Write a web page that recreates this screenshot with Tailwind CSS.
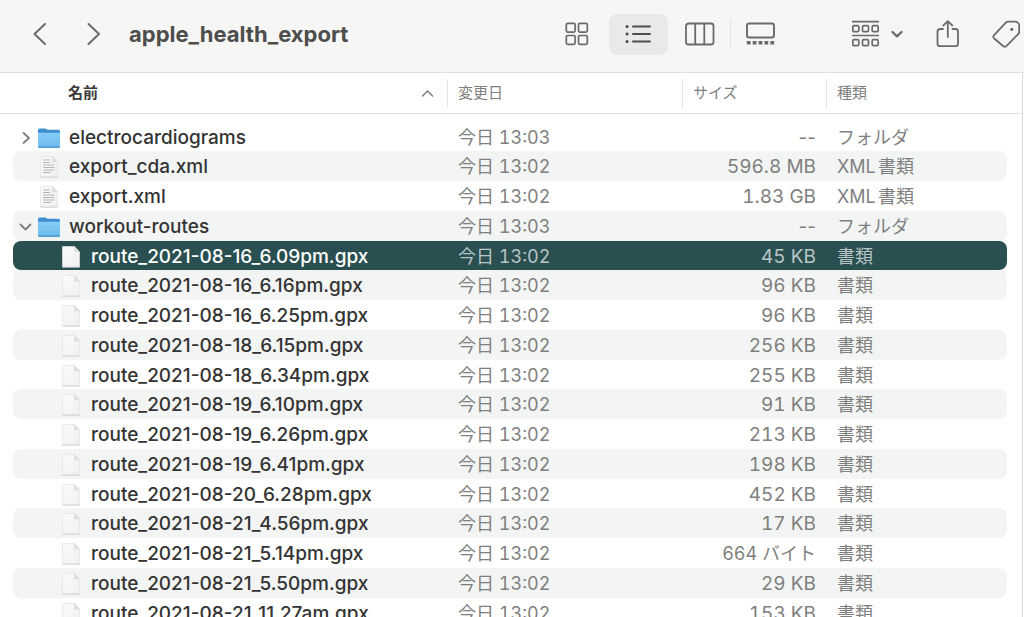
<!DOCTYPE html>
<html lang="ja">
<head>
<meta charset="utf-8">
<meta name="viewport" content="width=device-width, initial-scale=1">
<title>apple_health_export</title>
<script src="https://cdn.jsdelivr.net/npm/@tailwindcss/browser@4"></script>
</head>
<body class="flex h-screen flex-col overflow-hidden bg-white font-['Inter','Noto_Sans_CJK_JP',sans-serif] text-[#2b2b2b]">

<svg class="absolute size-0" aria-hidden="true">
  <defs>
    <linearGradient id="folder-face" x1="0" y1="0" x2="0" y2="1">
      <stop offset="0" stop-color="#86cdf7"/><stop offset="1" stop-color="#6cbcee"/>
    </linearGradient>
    <linearGradient id="paper" x1="0" y1="0" x2="1" y2="1">
      <stop offset="0" stop-color="#fbfbfb"/><stop offset="1" stop-color="#f0f0f0"/>
    </linearGradient>
    <symbol id="folder" viewBox="0 0 24 22">
      <path d="M1 3a1.6 1.6 0 0 1 1.600-1.600h5.200c.8 0 1.200.2 1.700.7l.6.6h11.300A1.600 1.600 0 0 1 23 4.300V10H1z" fill="#3f8fd0"/>
      <path d="M1 5.800h22v13.700a1.400 1.400 0 0 1-1.400 1.400H2.400A1.400 1.400 0 0 1 1 19.500z" fill="url(#folder-face)"/>
      <path d="M1 19.200v.4A1.400 1.400 0 0 0 2.400 21h19.200a1.400 1.400 0 0 0 1.400-1.400v-.4z" fill="#559fce"/>
    </symbol>
    <symbol id="doc" viewBox="0 0 24 24">
      <path d="M3.500 1.500h12L20.500 7v15h-17z" fill="url(#paper)" stroke="#e2e2e2" stroke-width=".7"/>
      <path d="M3.300 22.200h17.400" stroke="#cdcdcd" stroke-width=".8"/>
      <path d="M15.500 1.500V7h5z" fill="#dedede" stroke="#d6d6d6" stroke-width=".4"/>
    </symbol>
    <symbol id="doc-text" viewBox="0 0 24 24">
      <use href="#doc"/>
      <path d="M6 5h7M6 7.500h7M6 10h11.500M6 12.500h11.500M6 15h11.500M6 17.500h8" stroke="#b4b4b4" stroke-width="1.200"/>
    </symbol>
    <symbol id="closed" viewBox="0 0 14 14">
      <path d="M4.500 2 10 7l-5.500 5" fill="none" stroke="currentColor" stroke-width="1.800" stroke-linecap="round" stroke-linejoin="round"/>
    </symbol>
    <symbol id="open" viewBox="0 0 14 14">
      <path d="M1.500 4.500 6.500 9.500l5-5" fill="none" stroke="currentColor" stroke-width="1.800" stroke-linecap="round" stroke-linejoin="round"/>
    </symbol>
  </defs>
</svg>

<header class="flex h-[73px] shrink-0 items-center justify-between border-b border-[#e0e0e0] bg-[#f6f6f5] pb-1 pl-7 text-[#6b6b6a]">
  <div class="flex items-center">
    <button type="button" aria-label="戻る" class="flex h-10 w-6 items-center justify-center">
      <svg class="h-6 w-6" viewBox="0 0 24 24" fill="none" stroke="currentColor" stroke-width="2" stroke-linecap="round" stroke-linejoin="round"><path d="M17 2 6.500 12 17 22"/></svg>
    </button>
    <button type="button" aria-label="進む" class="ml-[30px] flex h-10 w-6 items-center justify-center">
      <svg class="h-6 w-6" viewBox="0 0 24 24" fill="none" stroke="currentColor" stroke-width="2" stroke-linecap="round" stroke-linejoin="round"><path d="M6.500 2 17 12 6.500 22"/></svg>
    </button>
    <h1 class="ml-[23px] text-[22px] leading-8 font-bold text-[#4d4d4c]">apple_health_export</h1>
  </div>
  <div class="flex shrink-0 items-center">
    <button type="button" aria-label="アイコン表示" class="flex h-10 w-6 items-center justify-center">
      <svg class="h-6 w-6" viewBox="0 0 24 24" fill="none" stroke="currentColor" stroke-width="1.700"><rect x="1.300" y="1.300" width="8.800" height="8.800" rx="1.300"/><rect x="13.500" y="1.300" width="8.800" height="8.800" rx="1.300"/><rect x="1.300" y="13.500" width="8.800" height="8.800" rx="1.300"/><rect x="13.500" y="13.500" width="8.800" height="8.800" rx="1.300"/></svg>
    </button>
    <button type="button" aria-label="リスト表示" aria-pressed="true" class="ml-5 flex h-[41px] w-[59px] items-center justify-center rounded-lg bg-[#e9e9e8] text-[#4d4d4c]">
      <svg class="h-5 w-7" viewBox="0 0 28 20" fill="none" stroke="currentColor" stroke-width="2" stroke-linecap="round"><path d="M8 2.500h17M8 10h17M8 17.500h17"/><path stroke-width="3" d="M2 2.500h.1M2 10h.1M2 17.500h.1"/></svg>
    </button>
    <button type="button" aria-label="カラム表示" class="ml-4 flex h-10 w-8 items-center justify-center">
      <svg class="h-6 w-8" viewBox="0 0 32 24" fill="none" stroke="currentColor" stroke-width="1.800"><rect x="2" y="1.500" width="27.500" height="21" rx="2.500"/><path d="M11.200 1.500v21M20.300 1.500v21"/></svg>
    </button>
    <span class="ml-[14px] h-[30px] w-px bg-[#e2e2e1]"></span>
    <button type="button" aria-label="ギャラリー表示" class="ml-[14px] flex h-10 w-8 items-center justify-center">
      <svg class="h-6 w-8" viewBox="0 0 32 24" fill="none" stroke="currentColor" stroke-width="1.900"><rect x="2" y="1.500" width="27" height="14" rx="2.300"/><path stroke-width="3.600" stroke-dasharray="3.800 2.100" d="M1.800 20.800h27.600"/></svg>
    </button>
    <button type="button" aria-label="グループ分け" class="ml-[74px] flex h-10 w-[54px] items-center justify-between">
      <svg class="h-7 w-[30px]" viewBox="0 0 30 28" fill="none" stroke="currentColor" stroke-width="1.700"><path d="M1 1.700h27M1 15.500h27"/><rect x="1.800" y="5.700" width="6" height="6" rx="1.200"/><rect x="11.500" y="5.700" width="6" height="6" rx="1.200"/><rect x="21.200" y="5.700" width="6" height="6" rx="1.200"/><rect x="1.800" y="19.700" width="6" height="6" rx="1.200"/><rect x="11.500" y="19.700" width="6" height="6" rx="1.200"/><rect x="21.200" y="19.700" width="6" height="6" rx="1.200"/></svg>
      <svg class="h-[14px] w-[14px]" viewBox="0 0 14 14" fill="none" stroke="currentColor" stroke-width="2.400" stroke-linecap="round" stroke-linejoin="round"><path d="M1.500 5 6 9.300 10.500 5"/></svg>
    </button>
    <button type="button" aria-label="共有" class="ml-[31px] flex h-10 w-6 items-center justify-center">
      <svg class="h-7 w-6" viewBox="0 0 24 28" fill="none" stroke="currentColor" stroke-width="1.800" stroke-linecap="round" stroke-linejoin="round"><path d="M7 9H4a2.500 2.500 0 0 0-2.500 2.500v12.200A2.500 2.500 0 0 0 4 26.200h15.500a2.500 2.500 0 0 0 2.500-2.500V11.500A2.500 2.500 0 0 0 19.500 9h-3"/><path d="M11.800 17V1.300M7.300 5.500l4.500-4.300 4.500 4.300"/></svg>
    </button>
    <button type="button" aria-label="タグ" class="ml-8 mr-1 flex h-10 w-7 items-center justify-center">
      <svg class="h-7 w-7" viewBox="0 0 28 28" fill="none" stroke="currentColor" stroke-width="1.800" stroke-linejoin="round"><path d="M1.900 15.300 13.800 2.700Q14.800 1.600 16.300 1.600h7.200q1.300 0 2.200 1l.5.500q1 1 1 2.300v6.300q0 1.400-1 2.400L14.300 26.200q-1.500 1.400-3 0L2 18.200q-1.400-1.400-.1-2.900z"/><circle cx="19.800" cy="9.300" r="1.600" fill="currentColor" stroke="none"/></svg>
    </button>
  </div>
</header>

<main class="mr-px min-h-0 flex-1 overflow-hidden border-r border-[#d8d8d8]">
  <table class="block w-full">
    <thead class="block border-b border-[#e4e4e4]">
      <tr class="ml-[13px] mr-[15px] grid h-10 grid-cols-[minmax(0,1fr)_235px_144px_181px] items-center text-left text-[15px] leading-5 text-[#7f7f7f]">
        <th scope="col" aria-sort="ascending" class="flex items-center justify-between pl-[55px] pr-3 font-bold text-[#3a3a3a]">名前
          <svg class="h-[14px] w-[14px] text-[#7f7f7f]" viewBox="0 0 14 14" fill="none" stroke="currentColor" stroke-width="1.500" stroke-linecap="round" stroke-linejoin="round"><path d="M1.500 10 6.500 5l5 5"/></svg>
        </th>
        <th scope="col" class="border-l border-[#e2e2e2] py-1 pl-[10px] font-normal">変更日</th>
        <th scope="col" class="border-l border-[#e2e2e2] py-1 pl-[10px] font-normal">サイズ</th>
        <th scope="col" class="border-l border-[#e2e2e2] py-1 pl-[10px] font-normal">種類</th>
      </tr>
    </thead>
    <tbody id="files" class="block pt-2"></tbody>
  </table>
</main>

<script>
const entries = [
  ['closed', 'electrocardiograms', '13:03', '--', 'フォルダ'],
  ['text', 'export_cda.xml', '13:02', '596.8 MB', 'XML書類'],
  ['text', 'export.xml', '13:02', '1.83 GB', 'XML書類'],
  ['open', 'workout-routes', '13:03', '--', 'フォルダ'],
  ['selected', 'route_2021-08-16_6.09pm.gpx', '13:02', '45 KB', '書類'],
  ['file', 'route_2021-08-16_6.16pm.gpx', '13:02', '96 KB', '書類'],
  ['file', 'route_2021-08-16_6.25pm.gpx', '13:02', '96 KB', '書類'],
  ['file', 'route_2021-08-18_6.15pm.gpx', '13:02', '256 KB', '書類'],
  ['file', 'route_2021-08-18_6.34pm.gpx', '13:02', '255 KB', '書類'],
  ['file', 'route_2021-08-19_6.10pm.gpx', '13:02', '91 KB', '書類'],
  ['file', 'route_2021-08-19_6.26pm.gpx', '13:02', '213 KB', '書類'],
  ['file', 'route_2021-08-19_6.41pm.gpx', '13:02', '198 KB', '書類'],
  ['file', 'route_2021-08-20_6.28pm.gpx', '13:02', '452 KB', '書類'],
  ['file', 'route_2021-08-21_4.56pm.gpx', '13:02', '17 KB', '書類'],
  ['file', 'route_2021-08-21_5.14pm.gpx', '13:02', '664 バイト', '書類'],
  ['file', 'route_2021-08-21_5.50pm.gpx', '13:02', '29 KB', '書類'],
  ['file', 'route_2021-08-21_11.27am.gpx', '13:02', '153 KB', '書類'],
];

const icon = {
  closed: '<button type="button" aria-label="開く" aria-expanded="false" class="mr-1 h-[14px] w-[14px] text-[#7f7f7f]"><svg class="h-full w-full"><use href="#closed"/></svg></button><svg class="mr-2 h-[22px] w-6"><use href="#folder"/></svg>',
  open: '<button type="button" aria-label="閉じる" aria-expanded="true" class="mr-1 h-[14px] w-[14px] text-[#7f7f7f]"><svg class="h-full w-full"><use href="#open"/></svg></button><svg class="mr-2 h-[22px] w-6"><use href="#folder"/></svg>',
  text: '<svg class="ml-[18px] mr-2 h-6 w-6"><use href="#doc-text"/></svg>',
  file: '<svg class="ml-10 mr-2 h-6 w-6"><use href="#doc"/></svg>',
};
icon.selected = icon.file;

document.getElementById('files').innerHTML = entries.map(([kind, name, time, size, type]) => {
  const selected = kind === 'selected';
  const tone = selected
    ? 'bg-[#2a4f51] text-[#b9c5c6]'
    : 'text-[#7f7f7f] even:bg-[#f3f5f4]';
  const nameTone = selected ? 'text-white' : 'text-[#333333]';
  const sizeText = size.includes('バイト') ? 'text-[18px] tabular-nums' : size === '--' ? 'text-[19px]' : 'text-[19px] tabular-nums';
  return `<tr class="ml-[13px] mr-[15px] grid h-[30px] grid-cols-[minmax(0,1fr)_235px_144px_181px] items-center rounded-lg pt-0.5 text-[18px] leading-7 whitespace-nowrap nth-[4n+1]:h-[29px] ${tone}" ${selected ? 'aria-selected="true"' : ''}>
    <td class="flex items-center pl-[6px] text-[19px] font-medium ${nameTone}">${icon[kind]}${name}</td>
    <td class="pl-[11px] tabular-nums">今日 ${time}</td>
    <td class="pr-[10px] text-right ${sizeText}">${size}</td>
    <td class="pl-[11px] [text-autospace:normal]">${type}</td>
  </tr>`;
}).join('');
</script>
</body>
</html>
